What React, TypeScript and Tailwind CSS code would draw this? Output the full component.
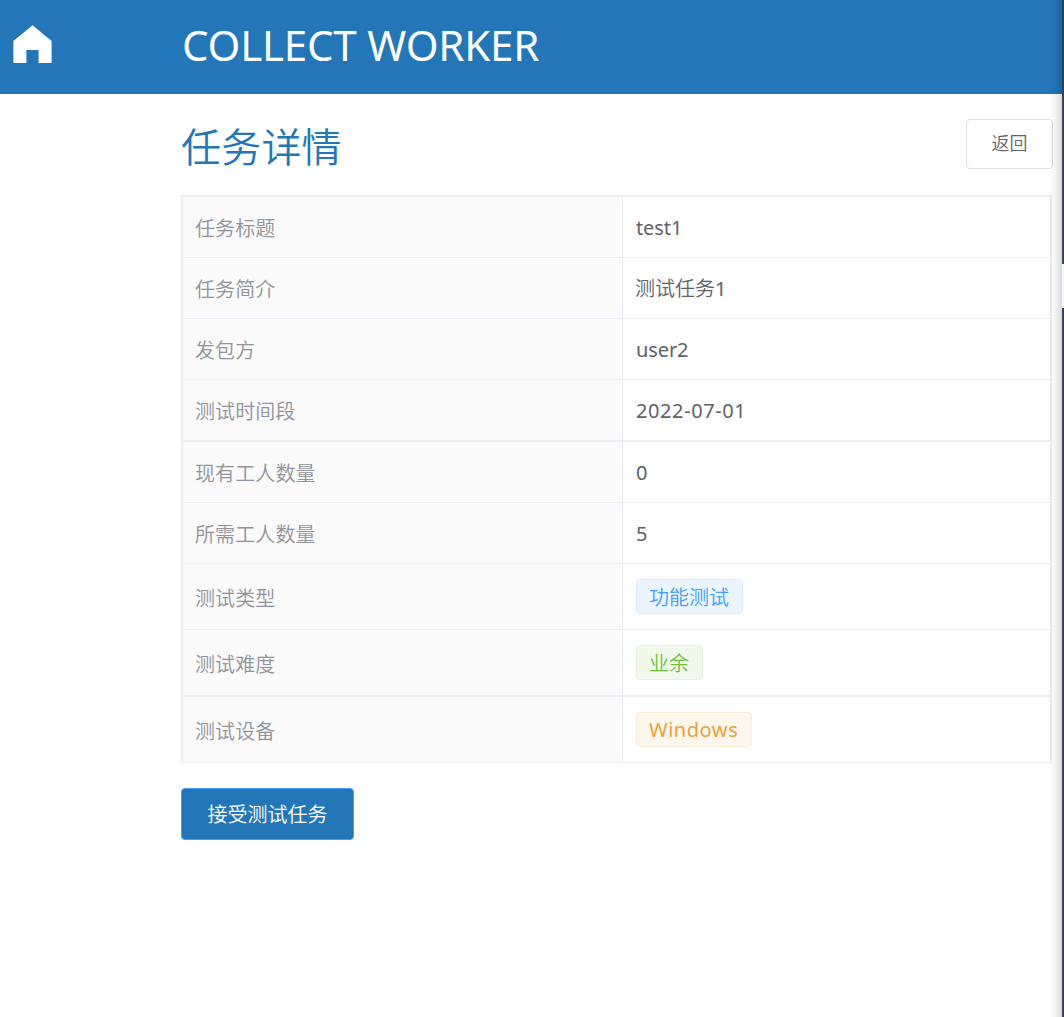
import type { ReactNode } from 'react';

type Row = { label: string; value: ReactNode; size: string };

function Tag({ children, tone }: { children: ReactNode; tone: string }) {
  return (
    <span className={`flex h-[35px] items-center rounded-[4px] border px-3 leading-none ${tone}`}>
      {children}
    </span>
  );
}

const rows: Row[] = [
  { label: '任务标题', value: <span className="pt-[2px] tracking-[-0.1px]">test1</span>, size: 'h-[61px] border-b' },
  { label: '任务简介', value: <span className="-ml-px pt-[2px] font-[350]">测试任务<span className="font-normal">1</span></span>, size: 'h-[61px] border-b' },
  { label: '发包方', value: <span className="pt-[2px] tracking-[-0.1px]">user2</span>, size: 'h-[61px] border-b' },
  { label: '测试时间段', value: <span className="pt-[2px] tracking-[0.6px]">2022-07-01</span>, size: 'h-[62px] border-b-2' },
  { label: '现有工人数量', value: <span className="pt-[2px]">0</span>, size: 'h-[61px] border-b' },
  { label: '所需工人数量', value: <span className="pt-[2px]">5</span>, size: 'h-[61px] border-b' },
  {
    label: '测试类型',
    value: <Tag tone="w-[107px] border-[#d9ecff] bg-[#ecf5ff] pt-[2px] font-[350] text-[#409eff]">功能测试</Tag>,
    size: 'h-[66px] border-b',
  },
  {
    label: '测试难度',
    value: <Tag tone="w-[67px] border-[#e1f3d8] bg-[#f0f9eb] pt-[2px] font-[350] text-[#67c23a]">业余</Tag>,
    size: 'h-[67px] border-b-2',
  },
  {
    label: '测试设备',
    value: <Tag tone="w-[116px] border-[#faecd8] bg-[#fdf6ec] tracking-[0.55px] text-[#e6a23c]">Windows</Tag>,
    size: 'h-[66px] border-b',
  },
];

export default function App() {
  return (
    <div className="relative h-[1017px] w-[1064px] overflow-hidden bg-white font-['Noto_Sans','Noto_Sans_CJK_SC',sans-serif] text-[20px] text-[#606266]">
      <header className="flex h-[94px] items-center bg-[#2376b8] text-white">
        <svg className="ml-[13px] h-[38px] w-[39px] shrink-0 -translate-y-[3px]" viewBox="0 0 39 38" fill="currentColor">
          <path d="M19.5 0.3 L38.6 16 V38 H25.6 V25 H13.4 V38 H0.4 V16 Z" />
        </svg>
        <span className="ml-[130px] -translate-y-[2px] whitespace-nowrap text-[42px] leading-none tracking-[-0.18px]">COLLECT WORKER</span>
      </header>
      <main className="ml-[181px] w-[872px]">
        <div className="flex h-[101px] items-start justify-between">
          <h1 className="mt-[33px] text-[40px] leading-[40px] font-[350] tracking-[0.2px] text-[#2376b8]">任务详情</h1>
          <button className="mt-[25px] h-[50px] w-[87px] rounded-[4px] border border-[#dcdfe6] bg-white pb-[3px] text-[18px] leading-none font-[350]">
            返回
          </button>
        </div>
        <dl className="mr-px border-x-2 border-t-2 border-[#ebeef5]">
          {rows.map((row) => (
            <div key={row.label} className={`flex border-[#ebeef5] ${row.size}`}>
              <dt className="flex w-[440px] items-center border-r border-[#ebeef5] bg-[#fafafa] pt-[4px] pl-3 font-[350] tracking-[0.1px] text-[#909399]">
                {row.label}
              </dt>
              <dd className="flex flex-1 items-center pl-[13px]">{row.value}</dd>
            </div>
          ))}
        </dl>
        <button className="mt-[25px] h-[52px] w-[173px] rounded-[4px] border border-[#409eff] bg-[#2376b8] pt-px leading-none font-[350] text-white">
          接受测试任务
        </button>
      </main>
      <div className="absolute inset-y-0 right-[2px] w-[14px] bg-linear-to-r from-black/0 via-black/4 to-black/15" />
      <div className="absolute inset-y-0 right-0 w-[2px] bg-[#363f54]">
        <div className="mt-[264px] h-[44px] bg-[#f0f3f9]" />
      </div>
    </div>
  );
}
